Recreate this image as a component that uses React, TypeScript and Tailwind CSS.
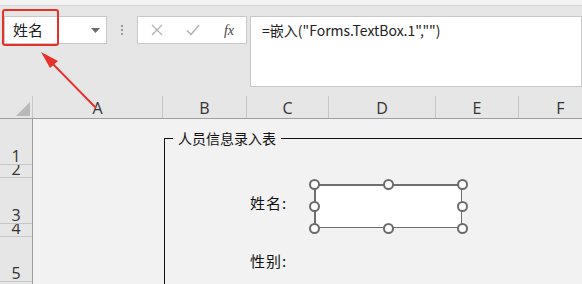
import React from 'react';

const cjk = '"Noto Sans CJK SC", "Noto Sans", sans-serif';

const columns = [
  { name: 'A', width: 'w-[130px]' },
  { name: 'B', width: 'w-[84px]' },
  { name: 'C', width: 'w-[82px]' },
  { name: 'D', width: 'w-[107px]' },
  { name: 'E', width: 'w-[83px]' },
  { name: 'F', width: 'w-[84px]' },
];

const rows = [
  { n: '1', h: 'h-[46px]' },
  { n: '2', h: 'h-[13px]' },
  { n: '3', h: 'h-[46px]' },
  { n: '4', h: 'h-[13px]' },
  { n: '5', h: 'h-[45px]' },
  { n: '6', h: 'h-[45px]' },
];

// selection handles of the embedded text box (centre points, relative to the box)
const handles = [
  [0, 0], [74, 0], [148, 0],
  [0, 22], [148, 22],
  [0, 44], [74, 44], [148, 44],
];

const Handle: React.FC<{ x: number; y: number }> = ({ x, y }) => (
  <span
    className="absolute w-[11px] h-[11px] rounded-full bg-white border-2 border-[#6b6b6b]"
    style={{ left: x - 5.5, top: y - 5.5 }}
  />
);

const App: React.FC = () => {
  return (
    <div className="relative w-[582px] h-[284px] overflow-hidden bg-[#e6e6e6]" style={{ fontFamily: cjk }}>
      {/* top strip */}
      <div className="h-[6px] bg-[#f3f3f3] border-b border-[#d6d6d6]" />

      {/* name box + formula bar */}
      <div className="flex items-start pl-[4px] pt-[10px]">
        <div className="w-[103px] h-[28px] bg-white border border-[#c8c8c8] flex items-center justify-between pl-[8px] pr-[6px]">
          <span className="text-[15px] text-[#222]">姓名</span>
          <svg width="9" height="5" viewBox="0 0 9 5"><path d="M0 0h9L4.5 5z" fill="#6a6a6a" /></svg>
        </div>
        <div className="w-[30px] h-[28px] flex flex-col items-center justify-center gap-[2px]">
          <span className="w-[2px] h-[2px] bg-[#9a9a9a]" />
          <span className="w-[2px] h-[2px] bg-[#9a9a9a]" />
          <span className="w-[2px] h-[2px] bg-[#9a9a9a]" />
        </div>
        <div className="w-[110px] h-[28px] bg-white border border-[#c8c8c8] flex items-center justify-between pl-[13px] pr-[12px]">
          <svg width="12" height="12" viewBox="0 0 12 12"><path d="M1 1l10 10M11 1L1 11" stroke="#b4b4b4" strokeWidth="1.4" /></svg>
          <svg width="14" height="12" viewBox="0 0 14 12"><path d="M1 6.5l4 4L13 1" stroke="#b4b4b4" strokeWidth="1.6" fill="none" /></svg>
          <span className="italic text-[14px] text-[#444]" style={{ fontFamily: '"Liberation Serif", serif' }}>fx</span>
        </div>
        <div className="ml-[3px] flex-1 h-[71px] bg-white border border-[#c8c8c8] pl-[11px]">
          <span className="text-[14px] leading-[26px] text-[#222]">=嵌入("Forms.TextBox.1","")</span>
        </div>
      </div>

      {/* column headers */}
      <div className="mt-[9px] flex h-[23px] border-b border-[#9e9e9e]" style={{ fontFamily: '"Open Sans", sans-serif' }}>
        <div className="w-[33px] shrink-0 flex items-end justify-end pr-[2px] pb-[2px] border-r border-[#c6c6c6]">
          <svg width="14" height="14" viewBox="0 0 14 14"><path d="M14 0v14H0z" fill="#b9b9b9" /></svg>
        </div>
        {columns.map(c => (
          <div key={c.name} className={`${c.width} shrink-0 flex items-center justify-center border-r border-[#c6c6c6] text-[16px] text-[#333] leading-none pt-[2px]`}>
            {c.name}
          </div>
        ))}
      </div>

      {/* sheet body */}
      <div className="flex">
        <div className="w-[33px] shrink-0 bg-[#e6e6e6] border-r border-[#9e9e9e]" style={{ fontFamily: '"Open Sans", sans-serif' }}>
          {rows.map(r => (
            <div key={r.n} className={`${r.h} overflow-hidden flex items-end justify-center border-b border-[#c6c6c6] text-[16px] leading-[16px] text-[#333]`}>
              {r.n}
            </div>
          ))}
        </div>

        <div className="relative flex-1 bg-[#f2f2f2]">
          {/* group box */}
          <div className="absolute left-[131px] top-[19px] w-[500px] h-[200px] border-l-[1.5px] border-t-[1.5px] border-[#111]">
            <span className="absolute left-[8px] -top-[10px] bg-[#f2f2f2] px-[5px] text-[14px] leading-[18px] text-[#111]">人员信息录入表</span>
          </div>

          <span className="absolute left-[217px] top-[73px] text-[15px] tracking-[1px] text-[#111]">姓名:</span>
          <span className="absolute left-[217px] top-[131px] text-[15px] tracking-[1px] text-[#111]">性别:</span>

          {/* embedded text box with selection handles */}
          <div className="absolute left-[281px] top-[65px] w-[148px] h-[44px]">
            <div className="absolute inset-0 bg-white border-2 border-[#6f6f6f] border-b border-r" />
            {handles.map(([x, y], i) => (
              <Handle key={i} x={x} y={y} />
            ))}
          </div>
        </div>
      </div>

      {/* annotation */}
      <div className="absolute left-[2px] top-[9px] w-[57px] h-[37px] border-2 border-[#e8302a] rounded-[3px]" />
      <svg className="absolute left-0 top-0 pointer-events-none" width="582" height="284">
        <line x1="96" y1="108" x2="50" y2="61" stroke="#e8302a" strokeWidth="1.8" />
        <path d="M41 52L58 61L50 68z" fill="#e8302a" />
      </svg>
    </div>
  );
};

export default App;
